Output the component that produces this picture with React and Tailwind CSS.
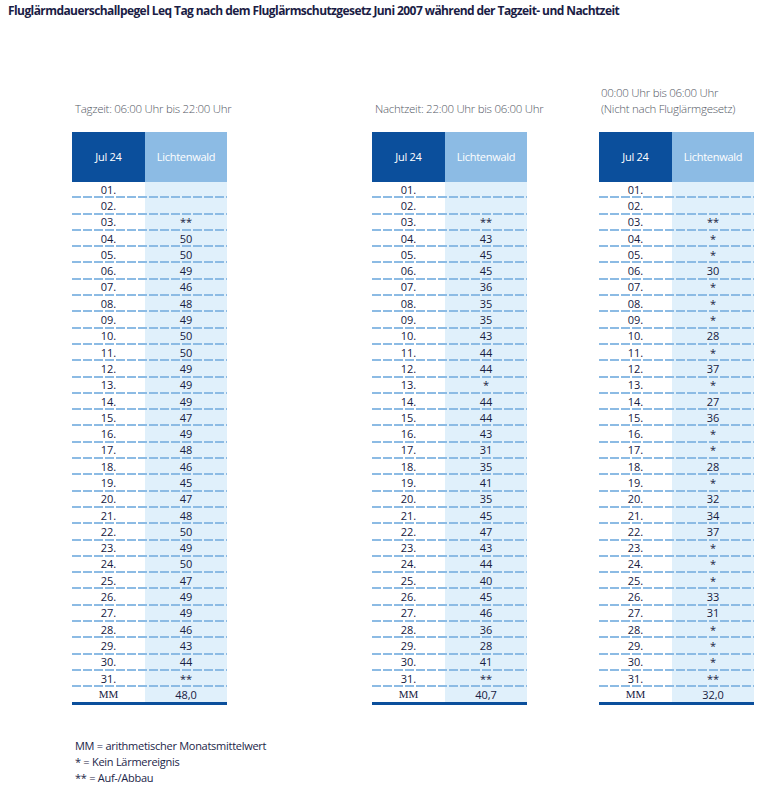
import React from "react";

const tag = ["", "", "**", "50", "50", "49", "46", "48", "49", "50", "50", "49", "49", "49", "47", "49", "48", "46", "45", "47", "48", "50", "49", "50", "47", "49", "49", "46", "43", "44", "**"];
const nacht = ["", "", "**", "43", "45", "45", "36", "35", "35", "43", "44", "44", "*", "44", "44", "43", "31", "35", "41", "35", "45", "47", "43", "44", "40", "45", "46", "36", "28", "41", "**"];
const frueh = ["", "", "**", "*", "*", "30", "*", "*", "*", "28", "*", "37", "*", "27", "36", "*", "*", "28", "*", "32", "34", "37", "*", "*", "*", "33", "31", "*", "*", "*", "**"];

const font = { fontFamily: '"Open Sans", "Liberation Sans", sans-serif' };

function Table({ values, mm }) {
  return (
    <div className="w-[155px] text-[11px] text-[#17203f]">
      <div className="flex h-[50px]">
        <div className="w-[73px] bg-[#0b4f9c] text-white flex items-center justify-center tracking-tight">Jul 24</div>
        <div className="flex-1 bg-[#8cbbe4] text-white flex items-center justify-center tracking-tight">Lichtenwald</div>
      </div>
      {values.map((v, i) => (
        <div key={i} className="relative flex h-[16.3px]">
          <div className="w-[73px] flex items-center justify-center pb-[2px] leading-none">{String(i + 1).padStart(2, "0")}.</div>
          <div className="flex-1 bg-[#e0f0fb] flex items-center justify-center pb-[2px] leading-none">{v}</div>
          <div className="absolute left-0 right-0 bottom-0 h-[2px] bg-[image:repeating-linear-gradient(to_right,#8cbbe4_0_9px,transparent_9px_11px)]"></div>
        </div>
      ))}
      <div className="flex h-[15px]">
        <div className="w-[73px] flex items-center justify-center leading-none" style={{ fontFamily: '"Liberation Serif", serif' }}>MM</div>
        <div className="flex-1 bg-[#e0f0fb] flex items-center justify-center leading-none">{mm}</div>
      </div>
      <div className="h-[3px] bg-[#0b4f9c]"></div>
    </div>
  );
}

const headCls = "h-[47px] flex flex-col justify-end pb-[15px] text-[11.5px] leading-[16px] text-[#555a66] font-light tracking-tight whitespace-nowrap";

export default function App() {
  return (
    <div className="w-[769px] h-[788px] bg-white relative overflow-hidden" style={font}>
      <div className="pt-[2px] pl-[8px] text-[12px] font-bold text-[#1b1d45] tracking-[-0.58px] leading-[18px] whitespace-nowrap">
        Fluglärmdauerschallpegel Leq Tag nach dem Fluglärmschutzgesetz Juni 2007 während der Tagzeit- und Nachtzeit
      </div>
      <div className="flex mt-[65px]">
        <div className="ml-[72px] w-[155px] shrink-0">
          <div className={headCls + " pl-[3px]"}>
            <div>Tagzeit: 06:00 Uhr bis 22:00 Uhr</div>
          </div>
          <Table values={tag} mm="48,0" />
        </div>
        <div className="ml-[145px] w-[155px] shrink-0">
          <div className={headCls + " pl-[3px]"}>
            <div>Nachtzeit: 22:00 Uhr bis 06:00 Uhr</div>
          </div>
          <Table values={nacht} mm="40,7" />
        </div>
        <div className="ml-[72px] w-[155px] shrink-0">
          <div className={headCls + " pl-[2px]"}>
            <div>00:00 Uhr bis 06:00 Uhr</div>
            <div>(Nicht nach Fluglärmgesetz)</div>
          </div>
          <Table values={frueh} mm="32,0" />
        </div>
      </div>
      <div className="mt-[33px] ml-[75px] text-[11px] leading-[16px] text-[#1b2548] tracking-tight">
        <div>MM = arithmetischer Monatsmittelwert</div>
        <div>* = Kein Lärmereignis</div>
        <div>** = Auf-/Abbau</div>
      </div>
    </div>
  );
}
